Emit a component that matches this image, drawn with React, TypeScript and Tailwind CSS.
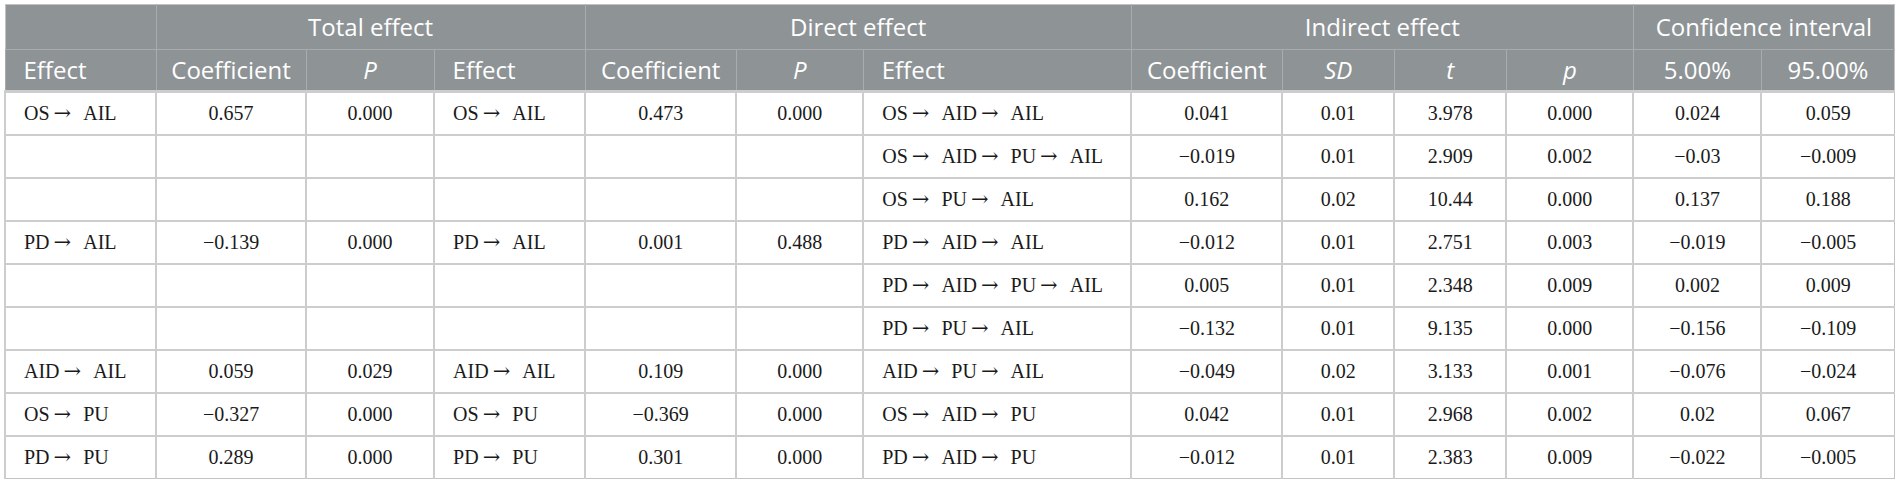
import React from 'react';

const widths = [151, 150, 128, 151, 151, 127, 268, 151, 112, 112, 127, 128, 133];

// columns that hold a path are left aligned
const textCols = [0, 3, 6];

function Path({ value }: { value: string }) {
  const parts = value.split('>');
  return (
    <>
      {parts.map((p, i) => (
        <React.Fragment key={i}>
          {i > 0 && (
            <span className="ml-[4px] mr-[12px] font-['DejaVu_Serif',serif] text-[21px] leading-none">{'\u2192'}</span>
          )}
          {p}
        </React.Fragment>
      ))}
    </>
  );
}

const rows: string[][] = [
  ['OS>AIL', '0.657', '0.000', 'OS>AIL', '0.473', '0.000', 'OS>AID>AIL', '0.041', '0.01', '3.978', '0.000', '0.024', '0.059'],
  ['', '', '', '', '', '', 'OS>AID>PU>AIL', '\u22120.019', '0.01', '2.909', '0.002', '\u22120.03', '\u22120.009'],
  ['', '', '', '', '', '', 'OS>PU>AIL', '0.162', '0.02', '10.44', '0.000', '0.137', '0.188'],
  ['PD>AIL', '\u22120.139', '0.000', 'PD>AIL', '0.001', '0.488', 'PD>AID>AIL', '\u22120.012', '0.01', '2.751', '0.003', '\u22120.019', '\u22120.005'],
  ['', '', '', '', '', '', 'PD>AID>PU>AIL', '0.005', '0.01', '2.348', '0.009', '0.002', '0.009'],
  ['', '', '', '', '', '', 'PD>PU>AIL', '\u22120.132', '0.01', '9.135', '0.000', '\u22120.156', '\u22120.109'],
  ['AID>AIL', '0.059', '0.029', 'AID>AIL', '0.109', '0.000', 'AID>PU>AIL', '\u22120.049', '0.02', '3.133', '0.001', '\u22120.076', '\u22120.024'],
  ['OS>PU', '\u22120.327', '0.000', 'OS>PU', '\u22120.369', '0.000', 'OS>AID>PU', '0.042', '0.01', '2.968', '0.002', '0.02', '0.067'],
  ['PD>PU', '0.289', '0.000', 'PD>PU', '0.301', '0.000', 'PD>AID>PU', '\u22120.012', '0.01', '2.383', '0.009', '\u22120.022', '\u22120.005'],
];

const subHeads: { label: string; italic?: boolean; left?: boolean }[] = [
  { label: 'Effect', left: true },
  { label: 'Coefficient' },
  { label: 'P', italic: true },
  { label: 'Effect', left: true },
  { label: 'Coefficient' },
  { label: 'P', italic: true },
  { label: 'Effect', left: true },
  { label: 'Coefficient' },
  { label: 'SD', italic: true },
  { label: 't', italic: true },
  { label: 'p', italic: true },
  { label: '5.00%' },
  { label: '95.00%' },
];

export default function App() {
  return (
    <div className="min-h-[486px] bg-white pl-[4px] pt-[4px]">
      <table className="table-fixed border-collapse border border-[#c3c3c3]" style={{ width: 1891 }}>
        <colgroup>
          {widths.map((w, i) => (
            <col key={i} style={{ width: w }} />
          ))}
        </colgroup>
        <thead className="bg-[#8e9396] font-['Open_Sans',sans-serif] text-[24px] font-normal text-white">
          <tr className="h-[45px]">
            <th className="border-r border-[#a8acaf]" />
            <th colSpan={3} className="border-r border-[#a8acaf] text-center font-normal">Total effect</th>
            <th colSpan={3} className="border-r border-[#a8acaf] text-center font-normal">Direct effect</th>
            <th colSpan={4} className="border-r border-[#a8acaf] text-center font-normal">Indirect effect</th>
            <th colSpan={2} className="text-center font-normal">Confidence interval</th>
          </tr>
          <tr className="h-[42px] border-t border-[#a8acaf]">
            {subHeads.map((h, i) => (
              <th
                key={i}
                className={
                  'border-l border-[#a8acaf] font-normal whitespace-nowrap ' +
                  (h.left ? 'pl-[18px] text-left ' : 'text-center ') +
                  (h.italic ? 'italic' : '')
                }
              >
                {h.label}
              </th>
            ))}
          </tr>
        </thead>
        <tbody className="font-['Liberation_Serif',serif] text-[20px] text-[#1a1a1a]">
          {rows.map((r, ri) => (
            <tr key={ri} className="h-[43px] border-t-2 border-[#cdcdcd] first:border-t-[3px]">
              {r.map((c, ci) => (
                <td
                  key={ci}
                  className={
                    'border-l-2 border-[#cdcdcd] whitespace-nowrap ' +
                    (textCols.includes(ci) ? 'pl-[18px] text-left' : 'text-center')
                  }
                >
                  {textCols.includes(ci) ? <Path value={c} /> : c}
                </td>
              ))}
            </tr>
          ))}
        </tbody>
      </table>
    </div>
  );
}
